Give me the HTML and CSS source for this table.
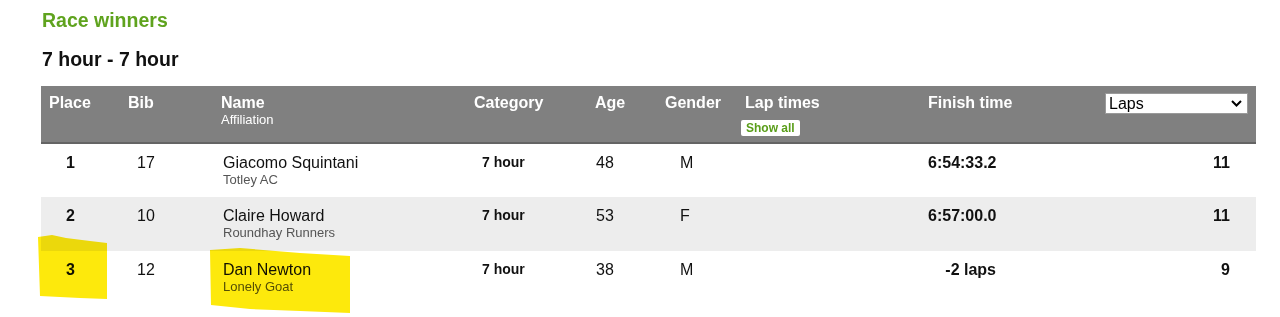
FILE: index.html
```html
<!DOCTYPE html>
<html lang="en">
<head>
    <meta charset="UTF-8">
    <meta name="viewport" content="width=device-width, initial-scale=1.0">
    <title>Race winners</title>
    <link rel="stylesheet" href="styles.css">
</head>
<body>

    <div class="page">
        <h2 class="title">Race winners</h2>
        <h3 class="race">7 hour - 7 hour</h3>

        <table class="results">
            <colgroup>
                <col class="c-place">
                <col class="c-bib">
                <col class="c-name">
                <col class="c-cat">
                <col class="c-age">
                <col class="c-gender">
                <col class="c-laptimes">
                <col class="c-finish">
                <col class="c-laps">
            </colgroup>
            <thead>
                <tr>
                    <th>Place</th>
                    <th>Bib</th>
                    <th>Name<span class="sub">Affiliation</span></th>
                    <th>Category</th>
                    <th>Age</th>
                    <th>Gender</th>
                    <th class="laptimes">Lap times<br><button type="button" class="show-all">Show all</button></th>
                    <th>Finish time</th>
                    <th class="sort">
                        <div class="select-wrap">
                            <select class="laps-select">
                                <option>Laps</option>
                                <option>Finish time</option>
                            </select>
                            <svg class="chev" width="11" height="7" viewBox="0 0 11 7"><path d="M1 1l4.5 4.5L10 1" fill="none" stroke="#000" stroke-width="2"/></svg>
                        </div>
                    </th>
                </tr>
            </thead>
            <tbody>
                <tr>
                    <td class="place">1</td>
                    <td class="bib">17</td>
                    <td class="name">Giacomo Squintani<span class="club">Totley AC</span></td>
                    <td class="cat">7 hour</td>
                    <td class="age">48</td>
                    <td class="gender">M</td>
                    <td></td>
                    <td class="finish">6:54:33.2</td>
                    <td class="laps">11</td>
                </tr>
                <tr class="alt">
                    <td class="place">2</td>
                    <td class="bib">10</td>
                    <td class="name">Claire Howard<span class="club">Roundhay Runners</span></td>
                    <td class="cat">7 hour</td>
                    <td class="age">53</td>
                    <td class="gender">F</td>
                    <td></td>
                    <td class="finish">6:57:00.0</td>
                    <td class="laps">11</td>
                </tr>
                <tr>
                    <td class="place">3</td>
                    <td class="bib">12</td>
                    <td class="name">Dan Newton<span class="club">Lonely Goat</span></td>
                    <td class="cat">7 hour</td>
                    <td class="age">38</td>
                    <td class="gender">M</td>
                    <td></td>
                    <td class="finish">-2 laps</td>
                    <td class="laps">9</td>
                </tr>
            </tbody>
        </table>
    </div>

    <!-- highlighter marks drawn over the screenshot -->
    <svg class="marks" width="1280" height="317" viewBox="0 0 1280 317">
        <path d="M38 237 L52 235 L66 238 L90 241 L107 243 L107 299 L80 298 L40 296 Z" fill="#fde90c"/>
        <path d="M210 250 L240 248 L300 253 L350 256 L350 313 L300 311 L250 309 L211 305 Z" fill="#fde90c"/>
    </svg>

</body>
</html>
```

FILE: styles.css
```css
body {
    font-family: "Liberation Sans", Arial, sans-serif;
    margin: 0;
    color: #111;
    background: #fff;
}

.page {
    padding: 9px 24px 0 41px;
}

.title {
    color: #5fa31e;
    font-size: 19.5px;
    line-height: 23px;
    margin: 0 0 16px 1px;
}

.race {
    font-size: 19.5px;
    line-height: 23px;
    margin: 0 0 15px 1px;
}

.results {
    width: 100%;
    border-collapse: collapse;
    table-layout: fixed;
}

.c-place { width: 79px; }
.c-bib { width: 93px; }
.c-name { width: 253px; }
.c-cat { width: 121px; }
.c-age { width: 70px; }
.c-gender { width: 80px; }
.c-laptimes { width: 183px; }
.c-finish { width: 177px; }

.results th {
    background-color: #808080;
    color: #fff;
    font-size: 16px;
    font-weight: bold;
    text-align: left;
    vertical-align: top;
    height: 57px;
    padding: 8px 8px 0 8px;
    box-sizing: border-box;
    border-bottom: 2px solid #646464;
}

.sub {
    display: block;
    font-size: 13px;
    font-weight: normal;
    line-height: 15px;
}

.show-all {
    margin: 8px 0 0 -4px;
    padding: 1px 5px;
    font-family: inherit;
    font-size: 12px;
    line-height: 14px;
    font-weight: bold;
    color: #5a9e1a;
    background: #fff;
    border: none;
    border-radius: 2px;
}

.results th.sort {
    padding-top: 7px;
}

.select-wrap {
    position: relative;
    width: 143px;
}

.laps-select {
    appearance: none;
    width: 143px;
    height: 21px;
    padding: 0 0 0 3px;
    font-family: inherit;
    font-size: 16px;
    color: #000;
    background: #fff;
    border: 1px solid #9a9a9a;
    border-radius: 0;
}

.chev {
    position: absolute;
    right: 6px;
    top: 7px;
    pointer-events: none;
}

.results td {
    height: 54px;
    box-sizing: border-box;
    padding: 10px 8px 0 8px;
    vertical-align: top;
    font-size: 16px;
}

.results tr.alt td {
    background-color: #ededed;
}

.results td.place {
    font-weight: bold;
    padding-left: 25px;
}

.results td.bib {
    padding-left: 17px;
}

.results td.name {
    padding-left: 10px;
}

.club {
    display: block;
    font-size: 13px;
    line-height: 15px;
    color: #555;
}

.results td.cat {
    font-size: 14px;
    font-weight: bold;
    padding-left: 16px;
}

.results td.age {
    padding-left: 9px;
}

.results td.gender {
    padding-left: 23px;
}

.results td.finish {
    font-weight: bold;
    text-align: right;
    padding-right: 101px;
}

.results td.laps {
    font-weight: bold;
    text-align: right;
    padding-right: 26px;
}

.marks {
    position: absolute;
    left: 0;
    top: 0;
    mix-blend-mode: multiply;
    pointer-events: none;
}
```
